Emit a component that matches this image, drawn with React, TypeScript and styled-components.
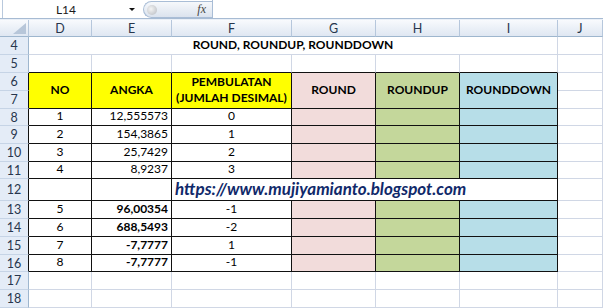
import React from 'react';
import styled, { createGlobalStyle } from 'styled-components';

const GlobalStyle = createGlobalStyle`
  body {
    margin: 0;
    background: #fff;
    font-family: Lato, "Liberation Sans", sans-serif;
  }
`;

const Window = styled.div`
  width: 603px;
  height: 308px;
  overflow: hidden;
  background: #fff;
  display: flex;
  flex-direction: column;
`;

const FormulaBar = styled.div`
  height: 19px;
  display: flex;
  align-items: stretch;
  border-bottom: 1px solid #a7bbd3;
  background: #fff;
`;

const NameBox = styled.div`
  width: 140px;
  margin-left: 2px;
  border-left: 1px solid #b9c9dd;
  display: flex;
  align-items: center;
  font-size: 12px;
  color: #1a1a1a;
`;

const NameText = styled.span`
  flex: 1;
  text-align: center;
`;

const DropArrow = styled.span`
  width: 0;
  height: 0;
  margin-right: 8px;
  border-left: 3px solid transparent;
  border-right: 3px solid transparent;
  border-top: 3px solid #111;
`;

const FxPill = styled.div`
  width: 69px;
  margin-top: 1px;
  height: 17px;
  border: 1px solid #a9bdd6;
  border-right: none;
  border-radius: 9px 0 0 9px;
  background: linear-gradient(#f6f8fb, #dbe3ee);
  display: flex;
  align-items: center;
  justify-content: space-between;
  padding: 0 6px 0 3px;
  box-sizing: border-box;
`;

const Knob = styled.span`
  width: 10px;
  height: 10px;
  border-radius: 50%;
  background: radial-gradient(circle at 40% 40%, #f4f4f4, #b5b9bf);
`;

const FxLabel = styled.span`
  font-family: "Liberation Serif", serif;
  font-style: italic;
  font-size: 12px;
  color: #444;
`;

const FormulaInput = styled.div`
  flex: 1;
  border-left: 1px solid #a9bdd6;
`;

const Band = styled.div`
  height: 3px;
  background: #e9eff7;
`;

const Sheet = styled.div`
  display: grid;
  grid-template-columns: 29px 63px 80px 120px 84px 84px 98px 1fr;
  grid-template-rows: 17px 18px 18px 18px 18px 17px 18px 18px 17px 22px 18px 18px 18px 17px 18px 18px;
`;

const ColHead = styled.div`
  display: flex;
  align-items: center;
  justify-content: center;
  background: linear-gradient(#f8fafd, #dfe7f2);
  border-right: 1px solid #b6c7dc;
  border-bottom: 1px solid #9eb6ce;
  font-size: 12.5px;
  color: #27364d;
  box-sizing: border-box;
`;

const Corner = styled(ColHead)`
  position: relative;
  &::after {
    content: '';
    position: absolute;
    right: 2px;
    bottom: 2px;
    border-left: 13px solid transparent;
    border-bottom: 11px solid #b7c6d9;
  }
`;

const RowHead = styled.div<{ $edge?: string }>`
  display: flex;
  align-items: center;
  justify-content: center;
  background: #e4ecf7;
  border-right: 1px solid ${p => p.$edge ?? '#9eb6ce'};
  border-bottom: 1px solid #c6d4e6;
  font-size: 12.5px;
  color: #27364d;
  box-sizing: border-box;
`;

type Align = 'left' | 'center' | 'right';

const Cell = styled.div<{
  $fill?: string;
  $bold?: boolean;
  $align?: Align;
  $right?: string;
  $bottom?: string;
  $span?: number;
  $rows?: number;
  $middle?: boolean;
}>`
  display: flex;
  flex-direction: column;
  justify-content: ${p => (p.$middle ? 'center' : 'flex-end')};
  align-items: ${p => (p.$align === 'right' ? 'flex-end' : p.$align === 'left' ? 'flex-start' : 'center')};
  text-align: ${p => p.$align ?? 'center'};
  padding: 0 3px 1px;
  box-sizing: border-box;
  background: ${p => p.$fill ?? '#fff'};
  border-right: 1px solid ${p => p.$right ?? '#d0d7e5'};
  border-bottom: 1px solid ${p => p.$bottom ?? '#d0d7e5'};
  grid-column: span ${p => p.$span ?? 1};
  grid-row: span ${p => p.$rows ?? 1};
  font-size: 12px;
  line-height: 16px;
  font-weight: ${p => (p.$bold ? 700 : 400)};
  color: #000;
  white-space: nowrap;
`;

const Link = styled.span`
  font-size: 17px;
  font-weight: 700;
  font-style: italic;
  color: #10296a;
  line-height: 20px;
`;

const INK = '#111';
const YELLOW = '#ffff00';
const PINK = '#f2dcdb';
const GREEN = '#c4d79b';
const BLUE = '#b7dee8';

type Row = { n: number; no: string; angka: string; digits: string; bold?: boolean };

const firstRows: Row[] = [
  { n: 8, no: '1', angka: '12,555573', digits: '0' },
  { n: 9, no: '2', angka: '154,3865', digits: '1' },
  { n: 10, no: '3', angka: '25,7429', digits: '2' },
  { n: 11, no: '4', angka: '8,9237', digits: '3' },
];

const secondRows: Row[] = [
  { n: 13, no: '5', angka: '96,00354', digits: '-1', bold: true },
  { n: 14, no: '6', angka: '688,5493', digits: '-2', bold: true },
  { n: 15, no: '7', angka: '-7,7777', digits: '1', bold: true },
  { n: 16, no: '8', angka: '-7,7777', digits: '-1', bold: true },
];

const DataRow: React.FC<{ row: Row }> = ({ row }) => (
  <>
    <RowHead $edge={INK}>{row.n}</RowHead>
    <Cell $right={INK} $bottom={INK}>{row.no}</Cell>
    <Cell $right={INK} $bottom={INK} $align="right" $bold={row.bold}>{row.angka}</Cell>
    <Cell $right={INK} $bottom={INK}>{row.digits}</Cell>
    <Cell $right={INK} $bottom={INK} $fill={PINK} />
    <Cell $right={INK} $bottom={INK} $fill={GREEN} />
    <Cell $right={INK} $bottom={INK} $fill={BLUE} />
    <Cell />
  </>
);

const BlankRow: React.FC<{ n: number; bottom?: string }> = ({ n, bottom }) => (
  <>
    <RowHead>{n}</RowHead>
    {[0, 1, 2, 3, 4, 5].map(i => (
      <Cell key={i} $bottom={bottom} />
    ))}
    <Cell />
  </>
);

const App: React.FC = () => {
  return (
    <Window>
      <GlobalStyle />
      <FormulaBar>
        <NameBox>
          <NameText>L14</NameText>
          <DropArrow />
        </NameBox>
        <FxPill>
          <Knob />
          <FxLabel>fx</FxLabel>
        </FxPill>
        <FormulaInput />
      </FormulaBar>
      <Band />
      <Sheet>
        <Corner />
        {['D', 'E', 'F', 'G', 'H', 'I', 'J'].map(c => (
          <ColHead key={c}>{c}</ColHead>
        ))}

        <RowHead>4</RowHead>
        <Cell $span={6} $bold $middle>ROUND, ROUNDUP, ROUNDDOWN</Cell>
        <Cell />

        <BlankRow n={5} bottom={INK} />

        <RowHead $edge={INK}>6</RowHead>
        <Cell $rows={2} $fill={YELLOW} $right={INK} $bottom={INK} $bold $middle>NO</Cell>
        <Cell $rows={2} $fill={YELLOW} $right={INK} $bottom={INK} $bold $middle>ANGKA</Cell>
        <Cell $rows={2} $fill={YELLOW} $right={INK} $bottom={INK} $bold $middle>
          <span>PEMBULATAN</span>
          <span>(JUMLAH DESIMAL)</span>
        </Cell>
        <Cell $rows={2} $fill={PINK} $right={INK} $bottom={INK} $bold $middle>ROUND</Cell>
        <Cell $rows={2} $fill={GREEN} $right={INK} $bottom={INK} $bold $middle>ROUNDUP</Cell>
        <Cell $rows={2} $fill={BLUE} $right={INK} $bottom={INK} $bold $middle>ROUNDDOWN</Cell>
        <Cell />
        <RowHead $edge={INK}>7</RowHead>
        <Cell />

        {firstRows.map(r => (
          <DataRow key={r.n} row={r} />
        ))}

        <RowHead $edge={INK}>12</RowHead>
        <Cell $right={INK} $bottom={INK} />
        <Cell $right={INK} $bottom={INK} />
        <Cell $span={4} $right={INK} $bottom={INK} $align="left" $middle>
          <Link>https://www.mujiyamianto.blogspot.com</Link>
        </Cell>
        <Cell />

        {secondRows.map(r => (
          <DataRow key={r.n} row={r} />
        ))}

        <BlankRow n={17} />
        <BlankRow n={18} />
      </Sheet>
    </Window>
  );
};

export default App;
